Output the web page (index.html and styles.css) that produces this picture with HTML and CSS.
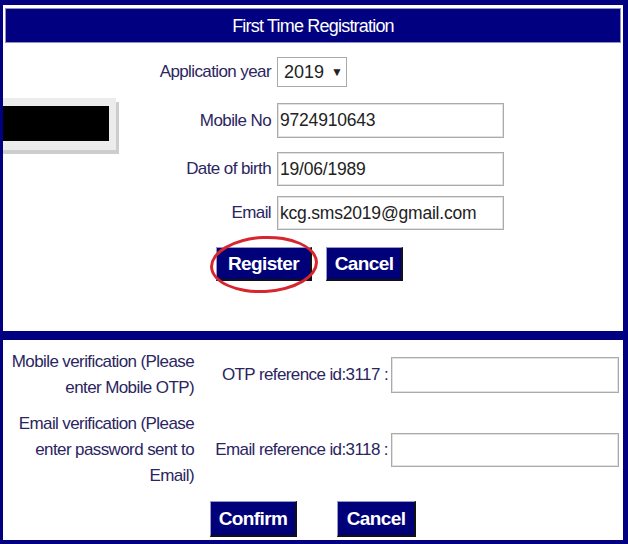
FILE: index.html
```html
<!DOCTYPE html>
<html lang="en">
<head>
    <meta charset="UTF-8">
    <meta name="viewport" content="width=device-width, initial-scale=1.0">
    <title>First Time Registration</title>
    <link rel="stylesheet" href="styles.css">
</head>
<body>
    <div class="frame">
        <section class="reg">
            <div class="reg-head">First Time Registration</div>

            <div class="row row-year">
                <label class="lbl">Application year</label>
                <div class="select">2019 <span class="caret">&#9660;</span></div>
            </div>
            <div class="row row-mobile">
                <label class="lbl">Mobile No</label>
                <input type="text" class="field" value="9724910643">
            </div>
            <div class="row row-dob">
                <label class="lbl">Date of birth</label>
                <input type="text" class="field" value="19/06/1989">
            </div>
            <div class="row row-email">
                <label class="lbl">Email</label>
                <input type="text" class="field" value="kcg.sms2019@gmail.com">
            </div>

            <div class="actions">
                <span class="marked">
                    <button class="btn btn-register">Register</button>
                    <span class="ring"></span>
                </span>
                <button class="btn btn-cancel">Cancel</button>
            </div>
        </section>

        <section class="verify">
            <div class="verify-grid">
                <div class="note">Mobile verification (Please<br>enter Mobile OTP)</div>
                <div class="ref">OTP reference id:3117 :</div>
                <input type="text" class="otp otp-mobile">

                <div class="note">Email verification (Please<br>enter password sent to<br>Email)</div>
                <div class="ref">Email reference id:3118 :</div>
                <input type="text" class="otp otp-email">
            </div>
            <div class="verify-actions">
                <button class="btn btn-confirm">Confirm</button>
                <button class="btn btn-cancel2">Cancel</button>
            </div>
        </section>

        <div class="redact"><span class="redact-box"></span></div>
    </div>
</body>
</html>
```

FILE: styles.css
```css
body {
    margin: 0;
    background-color: #fff;
    font-family: "Liberation Sans", Arial, sans-serif;
    font-size: 17px;
    letter-spacing: -0.6px;
    color: #2b2560;
}

.frame {
    position: relative;
    width: 628px;
    height: 544px;
    box-sizing: border-box;
    border-style: solid;
    border-color: #000080;
    border-width: 5px 5px 4px 3px;
    overflow: hidden;
}

/* top part */
.reg {
    height: 326px;
    box-sizing: border-box;
    padding: 4px 3px 0 3px;
}

.reg-head {
    height: 33px;
    line-height: 34px;
    background-color: #000080;
    color: #fff;
    text-align: center;
    font-size: 18px;
    letter-spacing: -0.8px;
    box-shadow: 0 0 0 1px #8f8fc4;
}

.row {
    display: flex;
    align-items: center;
}

.lbl {
    width: 265px;
    margin-right: 6px;
    text-align: right;
    white-space: nowrap;
}

.row-year {
    margin-top: 15px;
    height: 30px;
}

.row-mobile {
    margin-top: 16px;
    height: 35px;
}

.row-dob {
    margin-top: 14px;
    height: 34px;
}

.row-email {
    margin-top: 10px;
    height: 34px;
}

.select {
    width: 70px;
    height: 30px;
    box-sizing: border-box;
    border: 1px solid #a9a9a9;
    padding-left: 6px;
    font-size: 18px;
    letter-spacing: 0;
    line-height: 28px;
    color: #222;
    white-space: nowrap;
}

.caret {
    font-size: 12px;
    vertical-align: 2px;
    margin-left: 2px;
}

.field {
    width: 227px;
    height: 100%;
    box-sizing: border-box;
    border: 1px solid #aaa;
    box-shadow: inset 0 0 0 1px #e2e2e2;
    padding: 0 2px;
    font-family: inherit;
    font-size: 17.5px;
    letter-spacing: -0.2px;
    color: #222;
    background: #fff;
}

.actions {
    display: flex;
    justify-content: center;
    gap: 14px;
    margin-top: 17px;
    padding-right: 7px;
}

.btn {
    height: 34px;
    box-sizing: border-box;
    background-color: #000078;
    color: #fff;
    font-family: inherit;
    font-size: 19px;
    letter-spacing: -0.6px;
    font-weight: bold;
    padding: 0;
    border-style: solid;
    border-width: 1px 2px 2px 1px;
    border-color: #9a9ac8 #111 #111 #9a9ac8;
    cursor: pointer;
}

.marked {
    position: relative;
    display: inline-block;
    height: 34px;
}

.btn-register {
    width: 96px;
}

.btn-cancel {
    width: 77px;
}

/* red annotation circle */
.ring {
    position: absolute;
    left: -6px;
    top: -11px;
    width: 108px;
    height: 57px;
    box-sizing: border-box;
    border: 3px solid #d7262e;
    border-radius: 50%;
    transform: rotate(-3deg);
}

/* bottom part */
.verify {
    height: 200px;
    box-sizing: border-box;
    border-top: 9px solid #000080;
}

.verify-grid {
    display: grid;
    grid-template-columns: 191px 191px 228px;
    column-gap: 3px;
    row-gap: 10px;
    align-items: center;
    padding-top: 9px;
}

.note {
    text-align: right;
    line-height: 26px;
    white-space: nowrap;
}

.ref {
    text-align: right;
    white-space: nowrap;
}

.otp {
    width: 228px;
    box-sizing: border-box;
    border: 1px solid #aaa;
    box-shadow: inset 0 0 0 1px #e2e2e2;
    background: #fff;
}

.otp-mobile {
    height: 36px;
}

.otp-email {
    height: 34px;
}

.verify-actions {
    display: flex;
    gap: 40px;
    margin-top: 12px;
    padding-left: 207px;
}

.btn-confirm {
    width: 87px;
    height: 36px;
}

.btn-cancel2 {
    width: 79px;
    height: 36px;
}

/* blacked out block over the left edge */
.redact {
    position: absolute;
    left: -3px;
    top: 93px;
    width: 116px;
    height: 52px;
    padding: 8px 0 0 3px;
    box-sizing: border-box;
    background-color: #ececec;
    box-shadow: 3px 4px 0 #cdcdcd;
}

.redact-box {
    display: block;
    width: 106px;
    height: 35px;
    background-color: #000;
}
```
